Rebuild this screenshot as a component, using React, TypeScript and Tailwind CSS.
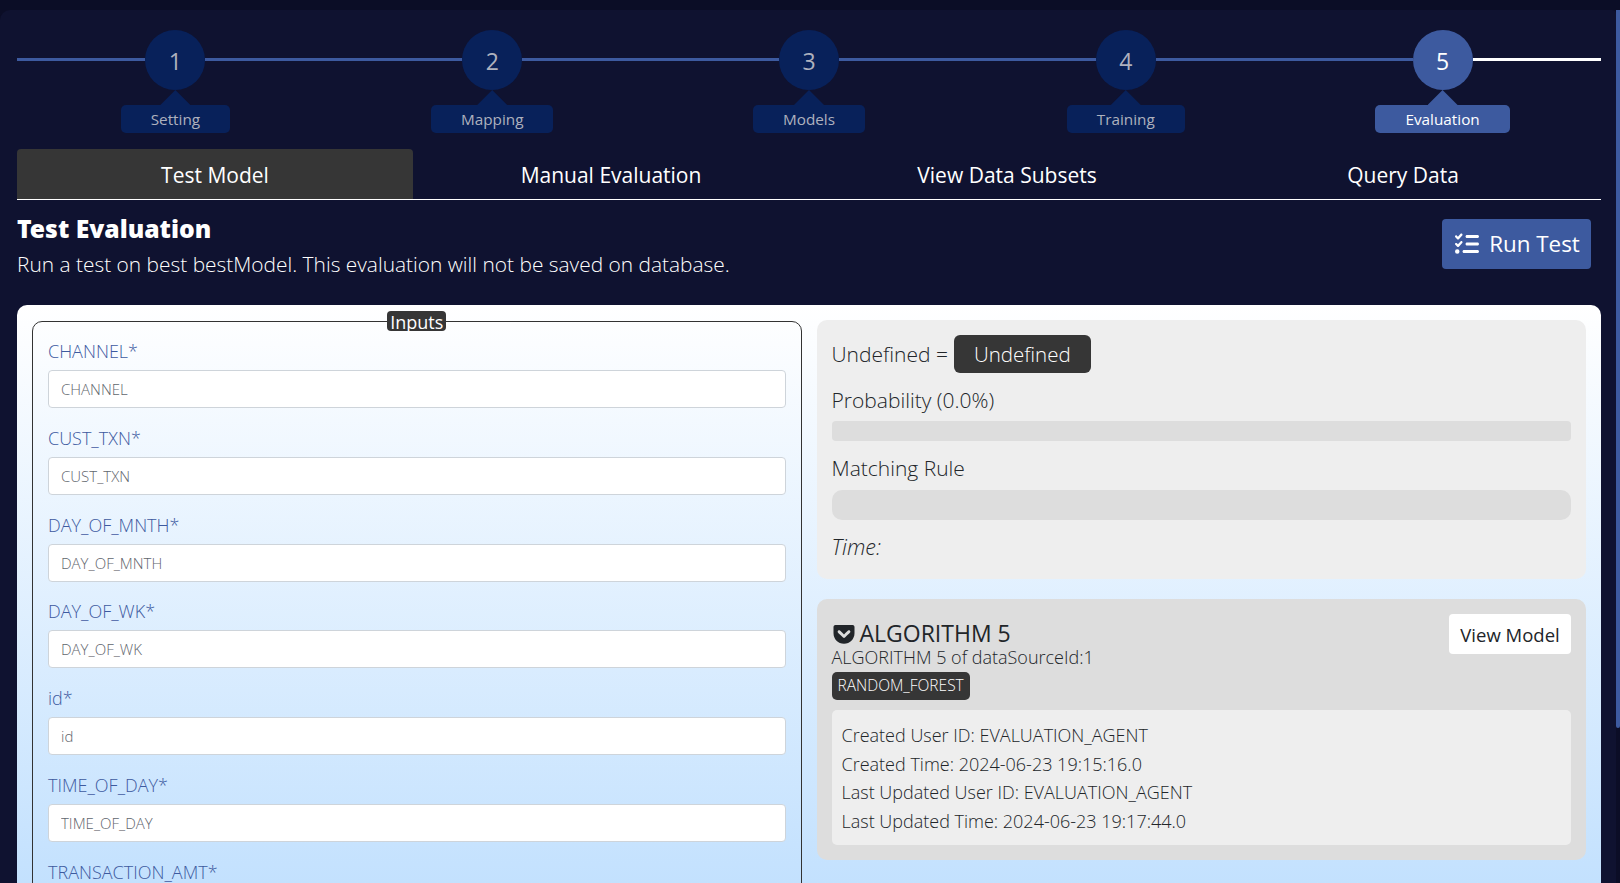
import { FaGetPocket } from "react-icons/fa";
import { FaListCheck } from "react-icons/fa6";

const steps = ["Setting", "Mapping", "Models", "Training", "Evaluation"];
const tabs = ["Test Model", "Manual Evaluation", "View Data Subsets", "Query Data"];
const fields = ["CHANNEL", "CUST_TXN", "DAY_OF_MNTH", "DAY_OF_WK", "id", "TIME_OF_DAY", "TRANSACTION_AMT"];
const auditLines = [
  "Created User ID: EVALUATION_AGENT",
  "Created Time: 2024-06-23 19:15:16.0",
  "Last Updated User ID: EVALUATION_AGENT",
  "Last Updated Time: 2024-06-23 19:17:44.0",
];

function Stepper() {
  return (
    <div className="flex pt-5">
      {steps.map((label, i) => {
        const active = i === steps.length - 1;
        return (
          <div key={label} className="flex flex-1 flex-col items-center">
            <div className="flex h-[60px] w-full items-center">
              <div className="mb-[1px] h-[3px] flex-1 bg-[#3d5a9f]" />
              <div
                className={
                  active
                    ? "flex h-[60px] w-[60px] items-center justify-center rounded-full bg-[#3d5a9f] pt-[2px] text-[23px] text-white"
                    : "flex h-[60px] w-[60px] items-center justify-center rounded-full bg-[#08215a] pt-[2px] text-[23px] text-[#aeb1be]"
                }
              >
                {i + 1}
              </div>
              <div className={active ? "mb-[1px] h-[3px] flex-1 bg-white" : "mb-[1px] h-[3px] flex-1 bg-[#3d5a9f]"} />
            </div>
            <div
              className={
                active
                  ? "h-[15px] w-[30px] bg-[#3d5a9f] [clip-path:polygon(50%_0,100%_100%,0_100%)]"
                  : "h-[15px] w-[30px] bg-[#08215a] [clip-path:polygon(50%_0,100%_100%,0_100%)]"
              }
            />
            <div
              className={
                active
                  ? "flex h-7 items-center rounded-[5px] bg-[#3d5a9f] px-[30px] pt-[1px] text-[15.3px] text-white"
                  : "flex h-7 items-center rounded-[5px] bg-[#08215a] px-[30px] pt-[1px] text-[15.3px] text-[#aeb1be]"
              }
            >
              {label}
            </div>
          </div>
        );
      })}
    </div>
  );
}

function Tabs() {
  return (
    <div className="mt-4 grid h-[51px] grid-cols-4 border-b border-white">
      {tabs.map((tab, i) => (
        <div
          key={tab}
          className={
            i === 0
              ? "flex items-center justify-center rounded-t-[4px] bg-[#363636] pt-[4px] text-[21px] text-white"
              : "flex items-center justify-center pt-[4px] text-[21px] text-white"
          }
        >
          {tab}
        </div>
      ))}
    </div>
  );
}

function InputsPanel() {
  return (
    <fieldset className="rounded-[10px] border border-[#333] px-[15px] pb-4">
      <legend className="mx-auto -mb-[2px] flex h-5 items-center rounded-[4px] bg-[#363636] px-[3px] pt-[1px] text-lg text-white">Inputs</legend>
      <div className="pt-[9px]">
        {fields.map((name) => (
          <div key={name} className="h-[86.8px]">
            <label className="mb-[5px] block text-lg leading-[27px] font-light text-[#3d5a9f]">{name}*</label>
            <input
              placeholder={name}
              className="block h-[38px] w-full rounded-[4px] border border-[#ced4da] bg-white px-3 text-[15px] font-light placeholder:text-[#5f666d]"
            />
          </div>
        ))}
      </div>
    </fieldset>
  );
}

function ResultCard() {
  return (
    <div className="h-[259px] rounded-[10px] bg-[#eeeeee] px-[15px] pt-[15px] font-light text-[#212529]">
      <div className="flex items-center text-[21px]">
        <span className="pt-[2px]">Undefined =</span>
        <span className="ml-[6px] flex h-[38px] items-center rounded-[6px] bg-[#363636] px-[20px] pt-[1px] text-[20.5px] text-white">Undefined</span>
      </div>
      <div className="mt-[12px] text-[21px] leading-[30px]">Probability (0.0%)</div>
      <div className="mt-[6px] h-5 rounded-[4px] bg-[#dddddd]" />
      <div className="mt-[12px] text-[21px] leading-[30px]">Matching Rule</div>
      <div className="mt-[7px] h-[30px] rounded-[10px] bg-[#dddddd]" />
      <div className="mt-[12px] text-[21.5px] leading-[30px] italic">Time:</div>
    </div>
  );
}

function ModelCard() {
  return (
    <div className="mt-5 h-[261px] rounded-[10px] bg-[#dddddd] px-[15px] pt-[15px] text-[#212529]">
      <div className="flex items-start justify-between">
        <div>
          <div className="mt-[6px] flex h-[27px] items-center gap-[4px] text-[23px] leading-[27px]">
            <FaGetPocket className="h-[24px] w-[24px] text-[#212529]" />
            <span>ALGORITHM 5</span>
          </div>
          <div className="-mt-[2px] text-lg leading-[24px] font-light">ALGORITHM 5 of dataSourceId:1</div>
        </div>
        <button className="flex h-10 w-[122px] items-center justify-center rounded-[4px] bg-white pt-[1px] text-[18.5px]">View Model</button>
      </div>
      <div className="mt-[3px] inline-flex h-7 items-center rounded-[5px] bg-[#363636] px-[6px] text-[15.5px] font-light text-white">RANDOM_FOREST</div>
      <div className="mt-[10px] h-[135px] rounded-[5px] bg-[#eeeeee] px-[10px] pt-[11px] text-[18px] leading-[28.7px] font-light">
        {auditLines.map((line) => (
          <div key={line}>{line}</div>
        ))}
      </div>
    </div>
  );
}

export default function App() {
  return (
    <div className="flex h-[883px] overflow-hidden bg-[#0b0d26] pt-[10px] font-['Open_Sans',sans-serif]">
      <div className="w-[1616px] rounded-tl-[10px] rounded-tr-[4px] bg-[#0f1230] pr-[15px] pl-[17px]">
        <Stepper />
        <Tabs />
        <div className="flex h-[105px] items-start justify-between text-white">
          <div className="pt-[13px]">
            <h1 className="font-['Noto_Sans',sans-serif] text-[24.7px] leading-[32px] font-black">Test Evaluation</h1>
            <p className="mt-[5px] text-[20.9px] leading-[28px] font-light">Run a test on best bestModel. This evaluation will not be saved on database.</p>
          </div>
          <button className="mt-[19px] mr-[10px] flex h-[50px] w-[149px] items-center justify-center gap-[10px] rounded-[4px] bg-[#3d5a9f] pl-[2px] text-[22.4px]">
            <FaListCheck className="h-6 w-6" />
            Run Test
          </button>
        </div>
        <div className="grid h-[578px] grid-cols-2 items-start gap-[15px] overflow-hidden rounded-t-[10px] bg-[linear-gradient(180deg,#ffffff,#c3e1fe)] px-[15px] pt-[6px]">
          <InputsPanel />
          <div className="pt-[9px]">
            <ResultCard />
            <ModelCard />
          </div>
        </div>
      </div>
      <div className="h-[718px] w-1 rounded-b-[3px] bg-[#3d5a9f]" />
    </div>
  );
}
